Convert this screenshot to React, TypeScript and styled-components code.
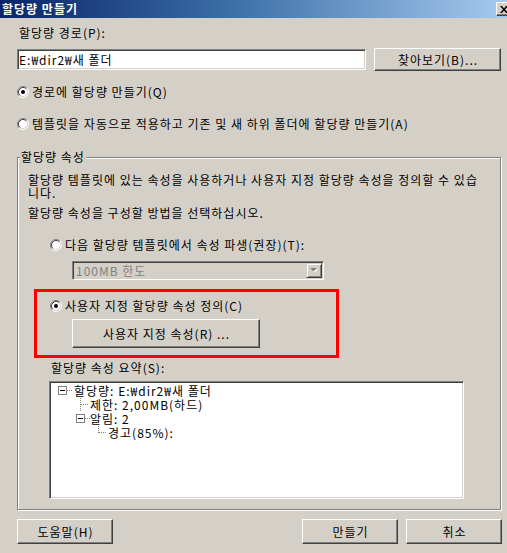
import React from "react";
import styled, { createGlobalStyle } from "styled-components";

const GlobalStyle = createGlobalStyle`
  html, body { margin: 0; padding: 0; background: #d4d0c8; }
  body {
    font-family: "Noto Sans CJK KR", "Liberation Sans", sans-serif;
    font-size: 12px;
    letter-spacing: 1px;
    line-height: 14px;
    color: #000;
  }
  * { box-sizing: border-box; }
`;

const Window = styled.div`
  width: 507px;
  height: 553px;
  background: #d4d0c8;
  overflow: hidden;
  display: flex;
  flex-direction: column;
`;

const TitleBar = styled.div`
  height: 18px;
  flex: none;
  display: flex;
  align-items: center;
  justify-content: space-between;
  padding-left: 2px;
  background: linear-gradient(to right, #0a246a 0%, #3a6ea5 45%, #a6caf0 100%);
  overflow: hidden;
`;

const Title = styled.span`
  color: #fff;
  font-weight: bold;
  font-size: 12px;
  letter-spacing: 1px;
  line-height: 18px;
`;

const CloseButton = styled.div`
  width: 16px;
  height: 14px;
  margin-right: -5px;
  background: #d4d0c8;
  border: 1px solid;
  border-color: #fff #404040 #404040 #fff;
  box-shadow: inset -1px -1px #808080;
  display: flex;
  align-items: center;
  justify-content: center;
`;

const Body = styled.div`
  flex: 1;
  display: flex;
  flex-direction: column;
  padding: 0 5px 0 17px;
`;

const FieldLabel = styled.div`
  margin-top: 8px;
  padding-left: 2px;
  line-height: 14px;
`;

const PathRow = styled.div`
  display: flex;
  align-items: center;
  gap: 8px;
  margin-top: 8px;
  width: 484px;
`;

const Sunken = styled.div<{ $w: number; $h: number; $bg?: string }>`
  width: ${(p) => p.$w}px;
  height: ${(p) => p.$h}px;
  background: ${(p) => p.$bg ?? "#fff"};
  border: 1px solid;
  border-color: #808080 #fff #fff #808080;
  box-shadow: inset 1px 1px #404040, inset -1px -1px #d4d0c8;
`;

const TextInput = styled(Sunken)`
  padding-left: 1px;
  line-height: 19px;
  white-space: nowrap;
`;

const Button = styled.div<{ $w: number; $h: number }>`
  width: ${(p) => p.$w}px;
  height: ${(p) => p.$h}px;
  flex: none;
  background: #d4d0c8;
  border: 1px solid;
  border-color: #fff #404040 #404040 #fff;
  box-shadow: inset -1px -1px #808080;
  display: flex;
  align-items: center;
  justify-content: center;
  padding-left: 1px;
  white-space: nowrap;
`;

const RadioRow = styled.div<{ $mt: number; $ml?: number }>`
  display: flex;
  align-items: center;
  gap: 3px;
  height: 14px;
  margin-top: ${(p) => p.$mt}px;
  margin-left: ${(p) => p.$ml ?? 0}px;
  white-space: nowrap;
`;

const GroupBox = styled.div`
  position: relative;
  width: 484px;
  margin-top: 26px;
  border: 1px solid #808080;
  box-shadow: inset 1px 1px #fff, 1px 1px #fff;
  padding: 15px 10px 10px 10px;
  display: flex;
  flex-direction: column;
  align-items: flex-start;
`;

const GroupLegend = styled.span`
  position: absolute;
  top: -8px;
  left: 2px;
  padding: 0 1px 0 1px;
  background: #d4d0c8;
  line-height: 14px;
`;

const Paragraph = styled.div<{ $mt?: number }>`
  line-height: 13px;
  margin-top: ${(p) => p.$mt ?? 0}px;
  white-space: nowrap;
`;

const ComboBox = styled(Sunken)`
  margin-top: 9px;
  margin-left: 44px;
  display: flex;
  align-items: center;
  justify-content: space-between;
  padding: 0 1px 0 3px;
  color: #808080;
`;

const ComboArrow = styled.div`
  width: 16px;
  height: 15px;
  background: #d4d0c8;
  border: 1px solid;
  border-color: #d4d0c8 #404040 #404040 #d4d0c8;
  box-shadow: inset 1px 1px #fff, inset -1px -1px #808080;
  display: flex;
  align-items: center;
  justify-content: center;
`;

const Highlight = styled.div`
  width: 305px;
  height: 69px;
  margin-top: 9px;
  margin-left: 6px;
  border: 3px solid #ff0000;
  padding: 7px 0 0 13px;
  display: flex;
  flex-direction: column;
  align-items: flex-start;
`;

const IndentedButton = styled(Button)`
  margin-top: 6px;
  margin-left: 22px;
`;

const SummaryLabel = styled.div`
  margin-top: 4px;
  margin-left: 23px;
  line-height: 12px;
`;

const TreeView = styled(Sunken)`
  margin-top: 7px;
  margin-left: 21px;
  padding: 2px 0 0 8px;
  display: flex;
  flex-direction: column;
`;

const TreeRow = styled.div<{ $level: number }>`
  display: flex;
  align-items: center;
  height: 14px;
  line-height: 14px;
  padding-left: ${(p) => p.$level * 18}px;
  white-space: nowrap;
`;

const TreeText = styled.span<{ $level: number }>`
  margin-left: ${(p) => (p.$level > 0 ? -2 : 0)}px;
`;

const ButtonBar = styled.div`
  display: flex;
  align-items: center;
  gap: 8px;
  margin-top: 9px;
`;

const Spacer = styled.div`
  flex: 1;
`;

function Radio({ checked }: { checked?: boolean }) {
  return (
    <svg width="12" height="12" viewBox="0 0 12 12" style={{ flex: "none" }}>
      <circle cx="6" cy="6" r="5" fill="#fff" />
      <path d="M2.11 9.89 A5.5 5.5 0 0 1 9.89 2.11" fill="none" stroke="#808080" />
      <path d="M9.89 2.11 A5.5 5.5 0 0 1 2.11 9.89" fill="none" stroke="#fff" />
      <path d="M2.82 9.18 A4.5 4.5 0 0 1 9.18 2.82" fill="none" stroke="#404040" />
      <path d="M9.18 2.82 A4.5 4.5 0 0 1 2.82 9.18" fill="none" stroke="#d4d0c8" />
      {checked && <circle cx="6" cy="6" r="2" fill="#000" />}
    </svg>
  );
}

type GlyphKind = "open" | "tee" | "last";

function TreeGlyph({ kind }: { kind: GlyphKind }) {
  return (
    <svg width="16" height="14" viewBox="0 0 16 14" style={{ flex: "none" }}>
      {kind === "open" && (
        <>
          <rect x="0.5" y="2.5" width="8" height="8" fill="#fff" stroke="#808080" />
          <line x1="2" y1="6.5" x2="7" y2="6.5" stroke="#000" />
          <line x1="9" y1="6.5" x2="14" y2="6.5" stroke="#808080" strokeDasharray="1 1" />
        </>
      )}
      {kind === "tee" && (
        <>
          <line x1="4.5" y1="0" x2="4.5" y2="14" stroke="#808080" strokeDasharray="1 1" />
          <line x1="5" y1="6.5" x2="13" y2="6.5" stroke="#808080" strokeDasharray="1 1" />
        </>
      )}
      {kind === "last" && (
        <>
          <line x1="4.5" y1="0" x2="4.5" y2="7" stroke="#808080" strokeDasharray="1 1" />
          <line x1="5" y1="6.5" x2="13" y2="6.5" stroke="#808080" strokeDasharray="1 1" />
        </>
      )}
    </svg>
  );
}

const treeItems: { level: number; kind: GlyphKind; text: string }[] = [
  { level: 0, kind: "open", text: "할당량: E:₩dir2₩새 폴더" },
  { level: 1, kind: "tee", text: "제한: 2,00MB(하드)" },
  { level: 1, kind: "open", text: "알림: 2" },
  { level: 2, kind: "last", text: "경고(85%):" },
];

export default function App() {
  return (
    <>
      <GlobalStyle />
      <Window>
        <TitleBar>
          <Title>할당량 만들기</Title>
          <CloseButton>
            <svg width="8" height="7" viewBox="0 0 8 7">
              <path d="M0 0 L2 0 L4 2.5 L6 0 L8 0 L5 3.5 L8 7 L6 7 L4 4.5 L2 7 L0 7 L3 3.5 Z" fill="#000" />
            </svg>
          </CloseButton>
        </TitleBar>
        <Body>
          <FieldLabel>할당량 경로(P):</FieldLabel>
          <PathRow>
            <TextInput $w={349} $h={21}>E:₩dir2₩새 폴더</TextInput>
            <Button $w={127} $h={23}>찾아보기(B)...</Button>
          </PathRow>
          <RadioRow $mt={14}>
            <Radio checked />
            <span>경로에 할당량 만들기(Q)</span>
          </RadioRow>
          <RadioRow $mt={18}>
            <Radio />
            <span>템플릿을 자동으로 적용하고 기존 및 새 하위 폴더에 할당량 만들기(A)</span>
          </RadioRow>
          <GroupBox>
            <GroupLegend>할당량 속성</GroupLegend>
            <Paragraph>
              할당량 템플릿에 있는 속성을 사용하거나 사용자 지정 할당량 속성을 정의할 수 있습
              <br />
              니다.
            </Paragraph>
            <Paragraph $mt={7}>할당량 속성을 구성할 방법을 선택하십시오.</Paragraph>
            <RadioRow $mt={19} $ml={22}>
              <Radio />
              <span>다음 할당량 템플릿에서 속성 파생(권장)(T):</span>
            </RadioRow>
            <ComboBox $w={252} $h={19} $bg="#d4d0c8">
              <span>100MB 한도</span>
              <ComboArrow>
                <svg width="8" height="5" viewBox="0 0 8 5">
                  <path d="M1 1 L8 1 L4.5 4.5 Z" fill="#fff" />
                  <path d="M0 0 L7 0 L3.5 3.5 Z" fill="#808080" />
                </svg>
              </ComboArrow>
            </ComboBox>
            <Highlight>
              <RadioRow $mt={0}>
                <Radio checked />
                <span>사용자 지정 할당량 속성 정의(C)</span>
              </RadioRow>
              <IndentedButton $w={188} $h={29}>사용자 지정 속성(R) ...</IndentedButton>
            </Highlight>
            <SummaryLabel>할당량 속성 요약(S):</SummaryLabel>
            <TreeView $w={415} $h={118}>
              {treeItems.map((item, i) => (
                <TreeRow key={i} $level={item.level}>
                  <TreeGlyph kind={item.kind} />
                  <TreeText $level={item.level}>{item.text}</TreeText>
                </TreeRow>
              ))}
            </TreeView>
          </GroupBox>
          <ButtonBar>
            <Button $w={96} $h={25}>도움말(H)</Button>
            <Spacer />
            <Button $w={96} $h={25}>만들기</Button>
            <Button $w={96} $h={25}>취소</Button>
          </ButtonBar>
        </Body>
      </Window>
    </>
  );
}
